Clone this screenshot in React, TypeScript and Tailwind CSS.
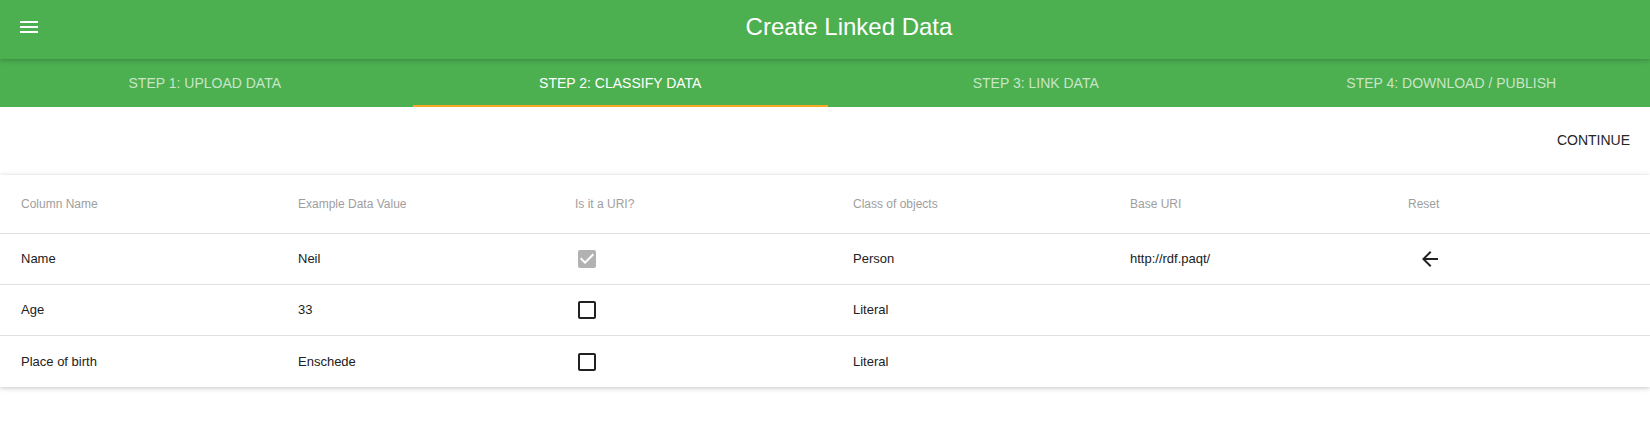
import React from "react";

const rows = [
  { name: "Name", value: "Neil", uri: true, cls: "Person", base: "http://rdf.paqt/", reset: true },
  { name: "Age", value: "33", uri: false, cls: "Literal", base: "", reset: false },
  { name: "Place of birth", value: "Enschede", uri: false, cls: "Literal", base: "", reset: false },
];

const headers = ["Column Name", "Example Data Value", "Is it a URI?", "Class of objects", "Base URI", "Reset"];
const tabs = ["STEP 1: UPLOAD DATA", "STEP 2: CLASSIFY DATA", "STEP 3: LINK DATA", "STEP 4: DOWNLOAD / PUBLISH"];

function Checked() {
  return (
    <svg width="24" height="24" viewBox="0 0 24 24" className="block">
      <path
        fill="#b2b2b2"
        d="M19 3H5c-1.11 0-2 .9-2 2v14c0 1.1.89 2 2 2h14c1.11 0 2-.9 2-2V5c0-1.1-.89-2-2-2zm-9 14l-5-5 1.41-1.41L10 14.17l7.59-7.59L19 8l-9 9z"
      />
    </svg>
  );
}

function Unchecked() {
  return (
    <svg width="24" height="24" viewBox="0 0 24 24" className="block">
      <path
        fill="#212121"
        d="M19 5v14H5V5h14m0-2H5c-1.11 0-2 .9-2 2v14c0 1.1.89 2 2 2h14c1.1 0 2-.9 2-2V5c0-1.1-.9-2-2-2z"
      />
    </svg>
  );
}

function ArrowBack() {
  return (
    <svg width="24" height="24" viewBox="0 0 24 24" className="block">
      <path fill="#212121" d="M20 11H7.83l5.59-5.59L12 4l-8 8 8 8 1.41-1.41L7.83 13H20v-2z" />
    </svg>
  );
}

export default function App() {
  return (
    <div className="w-[1650px] h-[428px] bg-white overflow-hidden font-['Liberation_Sans',Arial,sans-serif]">
      <header className="relative z-10 h-[59px] bg-[#4caf50] flex shadow-[0_1px_6px_rgba(0,0,0,0.12),0_1px_4px_rgba(0,0,0,0.12)]">
        <div className="w-[48px] pl-[17px] pt-[15px]">
          <svg width="24" height="24" viewBox="0 0 24 24" className="block">
            <path fill="#ffffff" d="M3 18h18v-2H3v2zm0-5h18v-2H3v2zm0-7v2h18V6H3z" />
          </svg>
        </div>
        <div className="flex-1 text-center text-white text-[24px] leading-[24px] pt-[15px]">Create Linked Data</div>
      </header>

      <nav className="h-[48px] bg-[#4caf50] flex -ml-[3px] w-[1662px]">
        {tabs.map((t, i) => (
          <div
            key={t}
            className={
              i === 1
                ? "relative flex-1 flex items-center justify-center pt-[1px] text-[14px] text-white"
                : "relative flex-1 flex items-center justify-center pt-[1px] text-[14px] text-[rgba(255,255,255,0.7)]"
            }
          >
            {t}
            {i === 1 && <div className="absolute left-0 right-0 bottom-0 h-[2px] bg-[#f9a825]" />}
          </div>
        ))}
      </nav>

      <div className="h-[68px] flex items-center justify-end pr-[20px] pb-[2px] text-[14px] text-[#262626]">CONTINUE</div>

      <div className="bg-white shadow-[0_1px_6px_rgba(0,0,0,0.12),0_1px_4px_rgba(0,0,0,0.12)]">
        <div className="grid grid-cols-[277px_277px_278px_277px_278px_1fr] h-[59px] border-b border-[#e0e0e0]">
          {headers.map((h) => (
            <div key={h} className="pl-[21px] flex items-center text-[12px] text-[#9e9e9e]">
              {h}
            </div>
          ))}
        </div>
        {rows.map((r, idx) => (
          <div
            key={r.name}
            className={
              idx === rows.length - 1
                ? "grid grid-cols-[277px_277px_278px_277px_278px_1fr] h-[51px] text-[13px] text-[#212121]"
                : "grid grid-cols-[277px_277px_278px_277px_278px_1fr] h-[51px] border-b border-[#e0e0e0] text-[13px] text-[#212121]"
            }
          >
            <div className="pl-[21px] flex items-center">{r.name}</div>
            <div className="pl-[21px] flex items-center">{r.value}</div>
            <div className="pl-[21px] flex items-center">{r.uri ? <Checked /> : <Unchecked />}</div>
            <div className="pl-[21px] flex items-center">{r.cls}</div>
            <div className="pl-[21px] flex items-center">{r.base}</div>
            <div className="pl-[31px] flex items-center">{r.reset ? <ArrowBack /> : null}</div>
          </div>
        ))}
      </div>
    </div>
  );
}
